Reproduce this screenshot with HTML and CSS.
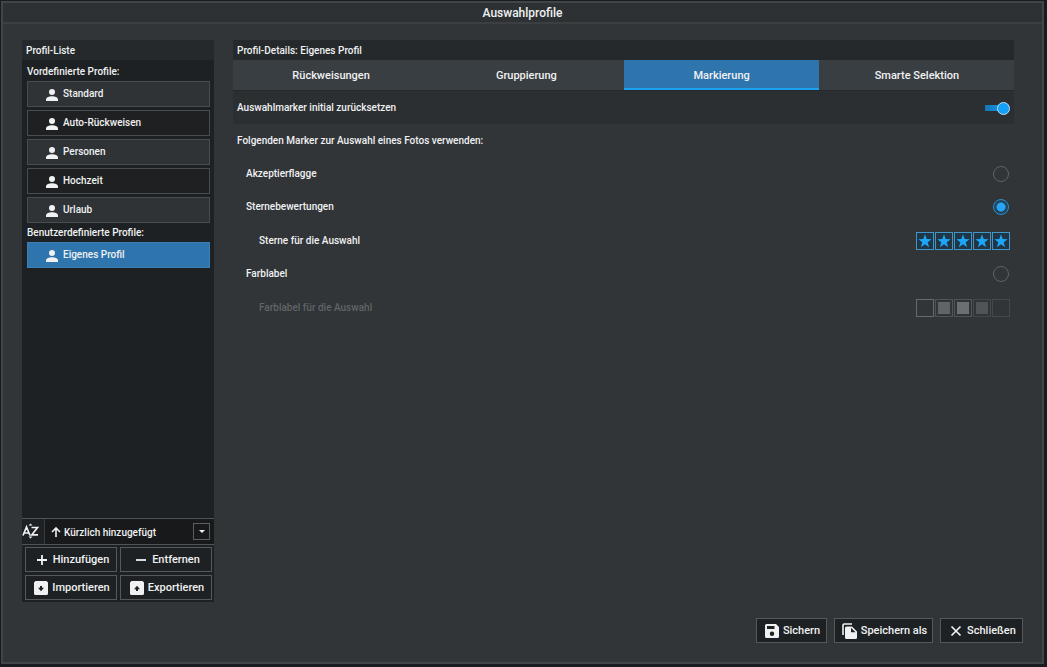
FILE: index.html
```html
<!DOCTYPE html>
<html lang="de">
<head>
<meta charset="utf-8">
<meta name="viewport" content="width=device-width, initial-scale=1">
<title>Auswahlprofile</title>
<link rel="stylesheet" href="styles.css">
</head>
<body>
<svg class="sprite" aria-hidden="true">
  <symbol id="person" viewBox="0 0 12 12"><circle cx="6" cy="3" r="3"/><path d="M0 12v-1.6C0 8.200 3.200 7.200 6 7.200s6 1 6 3.200V12z"/></symbol>
  <symbol id="star" viewBox="0 0 24 24"><path d="M12 .5l2.900 8.200 8.600.2-6.900 5.200 2.500 8.400L12 17.500l-7.100 5 2.500-8.400L.5 8.900l8.600-.2z"/></symbol>
  <symbol id="box" viewBox="0 0 14 14"><path fill-rule="evenodd" d="M1.500 0h11L14 1.500v11a1.500 1.500 0 0 1-1.500 1.500h-11A1.500 1.500 0 0 1 0 12.500v-11zM6 5v1.800H4L7 10.300l3-3.500H8V5z"/></symbol>
  <symbol id="box-up" viewBox="0 0 14 14"><path fill-rule="evenodd" d="M1.500 0h11L14 1.500v11a1.500 1.500 0 0 1-1.500 1.500h-11A1.500 1.500 0 0 1 0 12.500v-11zM6 10V8.200H4l3-3.500 3 3.500H8V10z"/></symbol>
</svg>
<div class="window">
  <header class="titlebar"><h1 class="title">Auswahlprofile</h1></header>
  <main class="content">
    <aside class="sidebar">
      <h2 class="panel-head">Profil-Liste</h2>
      <div class="profiles">
        <h3 class="group">Vordefinierte Profile:</h3>
        <div class="items">
          <button class="item"><svg class="person"><use href="#person"/></svg><span class="item-name">Standard</span></button>
          <button class="item item-alt"><svg class="person"><use href="#person"/></svg><span class="item-name">Auto-Rückweisen</span></button>
          <button class="item"><svg class="person"><use href="#person"/></svg><span class="item-name">Personen</span></button>
          <button class="item item-alt"><svg class="person"><use href="#person"/></svg><span class="item-name">Hochzeit</span></button>
          <button class="item"><svg class="person"><use href="#person"/></svg><span class="item-name">Urlaub</span></button>
        </div>
        <h3 class="group">Benutzerdefinierte Profile:</h3>
        <div class="items">
          <button class="item item-active"><svg class="person"><use href="#person"/></svg><span class="item-name">Eigenes Profil</span></button>
        </div>
      </div>
      <div class="sort">
        <label class="sort-label" for="sort" aria-label="Sortierung">
          <svg class="az" viewBox="0 0 18 16"><path d="M1 12.500L4.500 4 8 12.500M2.300 10h4.400M9.500 4.500h6l-5.700 7.300h6.200" fill="none" stroke="currentColor" stroke-width="1.700"/><path d="M6.500 2.500L8.500.5l2 2zM6.500 13.500l2 2 2-2z"/></svg>
        </label>
        <div class="select-wrap">
          <svg class="arrow" viewBox="0 0 10 10"><path d="M5 10V1M1 5l4-4 4 4" fill="none" stroke="currentColor" stroke-width="1.600"/></svg>
          <select class="select" id="sort"><option>Kürzlich hinzugefügt</option></select>
          <span class="drop"><svg class="caret" viewBox="0 0 6 3"><path d="M0 0h6L3 3z"/></svg></span>
        </div>
      </div>
      <div class="actions">
        <button class="btn"><svg class="icon" viewBox="0 0 14 14"><path d="M7 2v10M2 7h10" stroke="currentColor" stroke-width="1.800"/></svg>Hinzufügen</button>
        <button class="btn"><svg class="icon" viewBox="0 0 14 14"><path d="M2 7h10" stroke="currentColor" stroke-width="1.800"/></svg>Entfernen</button>
        <button class="btn"><svg class="icon"><use href="#box"/></svg>Importieren</button>
        <button class="btn"><svg class="icon"><use href="#box-up"/></svg>Exportieren</button>
      </div>
    </aside>
    <section class="details">
      <h2 class="panel-head">Profil-Details: Eigenes Profil</h2>
      <nav class="tabs" role="tablist">
        <button class="tab" role="tab">Rückweisungen</button>
        <button class="tab" role="tab">Gruppierung</button>
        <button class="tab tab-active" role="tab" aria-selected="true">Markierung</button>
        <button class="tab" role="tab">Smarte Selektion</button>
      </nav>
      <div class="row row-dark"><label for="reset">Auswahlmarker initial zurücksetzen</label><input class="switch" type="checkbox" id="reset" checked></div>
      <div class="row">Folgenden Marker zur Auswahl eines Fotos verwenden:</div>
      <div class="row row-option"><label for="flag">Akzeptierflagge</label><input class="radio" type="radio" name="marker" id="flag"></div>
      <div class="row row-option"><label for="stars">Sternebewertungen</label><input class="radio" type="radio" name="marker" id="stars" checked></div>
      <div class="row row-sub"><span>Sterne für die Auswahl</span>
        <div class="boxes">
          <button class="star" aria-label="1 Stern"><svg class="star-icon"><use href="#star"/></svg></button>
          <button class="star" aria-label="2 Sterne"><svg class="star-icon"><use href="#star"/></svg></button>
          <button class="star" aria-label="3 Sterne"><svg class="star-icon"><use href="#star"/></svg></button>
          <button class="star" aria-label="4 Sterne"><svg class="star-icon"><use href="#star"/></svg></button>
          <button class="star" aria-label="5 Sterne"><svg class="star-icon"><use href="#star"/></svg></button>
        </div>
      </div>
      <div class="row row-option"><label for="color">Farblabel</label><input class="radio" type="radio" name="marker" id="color"></div>
      <div class="row row-sub row-disabled"><span>Farblabel für die Auswahl</span>
        <div class="boxes">
          <button class="swatch swatch-none" disabled aria-label="Label 1"></button>
          <button class="swatch swatch-mid" disabled aria-label="Label 2"></button>
          <button class="swatch swatch-light" disabled aria-label="Label 3"></button>
          <button class="swatch swatch-dim" disabled aria-label="Label 4"></button>
          <button class="swatch" disabled aria-label="Label 5"></button>
        </div>
      </div>
    </section>
  </main>
  <footer class="footer">
    <button class="btn btn-save"><svg class="icon" viewBox="0 0 14 14"><path fill-rule="evenodd" d="M1.500 0H11l3 3v9.500a1.500 1.500 0 0 1-1.500 1.500h-11A1.500 1.500 0 0 1 0 12.500v-11A1.500 1.500 0 0 1 1.500 0zM2 2v3h7.500V2zM7 7.500a2.200 2.200 0 1 0 0 4.400 2.200 2.200 0 0 0 0-4.400z"/></svg>Sichern</button>
    <button class="btn btn-copy"><svg class="icon icon-copy" viewBox="0 0 15 16"><path d="M1 12V2.200A1.200 1.200 0 0 1 2.200 1H10" fill="none" stroke="currentColor" stroke-width="1.600"/><path fill-rule="evenodd" d="M4.500 3.500H10l5 5v6a1.500 1.500 0 0 1-1.500 1.500h-9A1.500 1.500 0 0 1 3 14.500V5a1.500 1.500 0 0 1 1.500-1.500zM9 4.700v4.600h4.600z"/></svg>Speichern als</button>
    <button class="btn btn-close"><svg class="icon" viewBox="0 0 14 14"><path d="M2.500 2.500l9 9M11.500 2.500l-9 9" stroke="currentColor" stroke-width="1.700"/></svg>Schließen</button>
  </footer>
</div>
</body>
</html>
```
FILE: styles.css
```css
* { box-sizing: border-box; }

body {
  margin: 0;
  min-height: 100vh;
  display: flex;
  padding: 1px 3px 3px 1px;
  background: #191c1f;
  color: #f0f1f2;
  font: 500 10px/14px Roboto, "Liberation Sans", sans-serif;
}

h1, h2, h3 { margin: 0; font: inherit; }

button {
  padding: 0;
  border: 0;
  background: none;
  color: inherit;
  font: inherit;
}

svg { flex: none; fill: currentColor; }

.sprite { position: absolute; width: 0; height: 0; }

.window {
  flex: 1;
  display: flex;
  flex-direction: column;
  background: #313538;
  border: 2px solid #414548;
}

.titlebar {
  height: 21px;
  background: #2d3134;
  border-bottom: 2px solid #3b3f42;
}

.title {
  font-size: 12px;
  line-height: 20px;
  text-align: center;
}

.content {
  flex: 1;
  display: flex;
  gap: 19px;
  padding: 16px 28px 16px 19px;
}

.sidebar {
  width: 192px;
  display: flex;
  flex-direction: column;
  background: #1d2123;
}

.panel-head {
  height: 20px;
  padding: 1px 4px 0;
  background: #25292c;
  line-height: 20px;
}

.profiles { flex: 1; padding: 2px 4px 0 5px; }

.group { height: 19px; line-height: 20px; }

.items { display: grid; gap: 3px; }

.item {
  display: flex;
  align-items: center;
  gap: 5px;
  height: 26px;
  padding-left: 18px;
  border: 1px solid #484c4f;
  background: #2f3336;
}

.item-alt { background: #1f2021; }
.item-active { background: #2e75ae; border-color: #3e7eb2; }

.person { width: 12px; height: 12px; margin-top: 2px; }

.sort {
  display: flex;
  height: 27px;
  border: 1px solid #505456;
  border-width: 1px 0;
  background: #17191a;
}

.sort-label {
  width: 23px;
  display: grid;
  align-items: center;
  padding-bottom: 1px;
  border-right: 1px solid #3a3d3f;
  background: #1d2123;
}

.az { width: 18px; height: 16px; }

.select-wrap { position: relative; flex: 1; display: flex; }

.select {
  flex: 1;
  appearance: none;
  padding: 3px 20px 0 19px;
  border: 0;
  background: none;
  color: inherit;
  font: inherit;
}

.arrow {
  position: absolute;
  left: 6px;
  top: 8px;
  width: 10px;
  height: 10px;
}

.drop {
  position: absolute;
  right: 4px;
  top: 4px;
  width: 17px;
  height: 17px;
  display: grid;
  place-items: center;
  border: 1px solid #5b5f62;
  pointer-events: none;
}

.caret { width: 6px; height: 3px; }

.actions {
  display: grid;
  grid-template-columns: 1fr 1fr;
  gap: 3px;
  padding: 2px 2px 2px 3px;
}

.btn {
  display: flex;
  align-items: center;
  justify-content: center;
  gap: 4px;
  height: 25px;
  padding-left: 2px;
  border: 1px solid #55595c;
  background: #1d2123;
  font-size: 11px;
}

.icon { width: 14px; height: 14px; }
.icon-copy { width: 15px; height: 16px; }

.details { flex: 1; }

.tabs {
  display: grid;
  grid-template-columns: repeat(4, 1fr);
  height: 31px;
  padding-bottom: 1px;
  background: #25292c;
}

.tab {
  padding: 4px 0 0 1px;
  border-bottom: 2px solid #393e42;
  background: #393e42;
  font-size: 11px;
}

.tab-active { background: #2e75ae; border-color: #1ba0f2; }

.row {
  display: flex;
  align-items: center;
  justify-content: space-between;
  min-height: 33px;
  padding: 1px 4px 0;
}

.row-dark { background: #2b2f32; }
.row-option { padding: 1px 5px 0 13px; }
.row-sub { min-height: 34px; padding-left: 26px; }
.row-disabled { color: #606467; }

.switch {
  appearance: none;
  display: flex;
  align-items: center;
  justify-content: flex-end;
  width: 25px;
  height: 12px;
  margin: 0;
  background: linear-gradient(90deg, #1573b4, #1b9df0) 0 50% / 20px 6px no-repeat;
}

.switch::before {
  content: "";
  width: 11px;
  height: 11px;
  border: 1px solid #b9dcf2;
  border-radius: 50%;
  background: #14a0f8;
}

.radio {
  appearance: none;
  width: 16px;
  height: 16px;
  margin: 0;
  border: 1px solid #5f6366;
  border-radius: 50%;
}

.radio:checked {
  border-color: #2b8fd0;
  background: radial-gradient(circle, #27a4f5 4px, #214459 5px);
}

.boxes { display: flex; gap: 1px; }

.star, .swatch {
  width: 18px;
  height: 18px;
  display: grid;
  place-items: center;
  border: 1px solid #3f96cb;
}

.star { background: #203644; color: #1da5fa; }
.star-icon { width: 14px; height: 14px; }

.swatch {
  padding: 2px;
  border-color: #44484a;
  background-clip: content-box;
}

.swatch-none { border-color: #666a6c; }
.swatch-mid { background-color: #606467; border-color: #505457; }
.swatch-light { background-color: #6b6f71; border-color: #505457; }
.swatch-dim { background-color: #505457; }

.footer {
  display: flex;
  justify-content: flex-end;
  gap: 7px;
  padding: 0 19px 19px;
}

.btn-save { width: 71px; }
.btn-copy { width: 99px; }
.btn-close { width: 83px; }
```
